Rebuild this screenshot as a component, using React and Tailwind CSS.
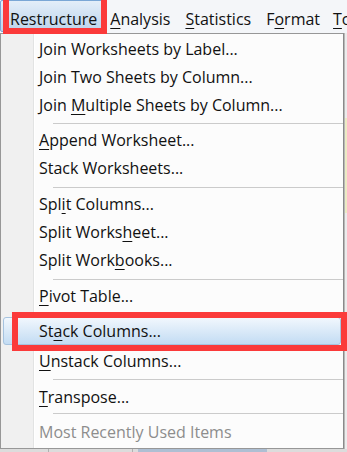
import React from 'react';

const Mn = ({ pre = '', u = '', post = '' }) => (
  <span className="whitespace-pre">
    {pre}
    {u && <span className="underline underline-offset-[3px] decoration-[1px]">{u}</span>}
    {post}
  </span>
);

const Row = ({ children, className = '' }) => (
  <div className={`flex h-[28px] items-center pl-[38px] whitespace-nowrap ${className}`}>
    <span>{children}</span>
  </div>
);

const Sep = ({ className }) => (
  <div className={className}>
    <div className="ml-[52px] h-px bg-[#cbcbcb]" />
  </div>
);

const MenuBar = () => (
  <div className="flex h-[33px] items-start bg-[#f4f6f9] text-[16px] text-[#111]">
    <div className="flex h-[32px] items-center rounded-[2px] border border-[#7aa7d6] bg-gradient-to-b from-[#e3eef9] to-[#bcd4ec] pl-[9px] pr-[5px] pt-[6px]">
      <Mn pre="Restr" u="u" post="cture" />
    </div>
    <div className="flex h-[32px] items-center pl-[7px] pr-[7px] pt-[6px]">
      <Mn u="A" post="nalysis" />
    </div>
    <div className="flex h-[32px] items-center px-[8px] pt-[6px]">
      <Mn u="S" post="tatistics" />
    </div>
    <div className="flex h-[32px] items-center px-[7px] pt-[6px]">
      <Mn pre="F" u="o" post="rmat" />
    </div>
    <div className="flex h-[32px] items-center pl-[6px] pt-[6px]">
      <Mn u="T" post="o" />
    </div>
  </div>
);

const Menu = () => (
  <div className="w-[344px] border border-[#979797] border-r-[#8a8a8a] bg-[linear-gradient(to_right,#f0f0f0_0_32px,#e2e3e3_32px_33px,#ffffff_33px_34px,#fcfcfc_34px)] pt-[1px] pb-[2px] text-[16px] text-[#111]">
    <Row>Join Worksheets by Label...</Row>
    <Row>Join Two Sheets by Column...</Row>
    <Row>
      <Mn pre="Join " u="M" post="ultiple Sheets by Column..." />
    </Row>
    <Sep className="pt-[4px] pb-[2px]" />
    <Row>
      <Mn u="A" post="ppend Worksheet..." />
    </Row>
    <Row>Stack Worksheets...</Row>
    <Sep className="pt-[5px] pb-[2px]" />
    <Row>
      <Mn pre="Spl" u="i" post="t Columns..." />
    </Row>
    <Row>
      <Mn pre="Split Works" u="h" post="eet..." />
    </Row>
    <Row>
      <Mn pre="Split Work" u="b" post="ooks..." />
    </Row>
    <Sep className="pt-[5px] pb-[2px]" />
    <Row>
      <Mn u="P" post="ivot Table..." />
    </Row>
    <div className="mt-[7px] mx-[2px] flex h-[28px] items-center rounded-[3px] border border-[#a6c3df] bg-gradient-to-b from-[#f1f7fd] to-[#c3dcf3] pl-[35px] whitespace-nowrap">
      <Mn pre="St" u="a" post="ck Columns..." />
    </div>
    <Row className="mt-[2px]">
      <Mn u="U" post="nstack Columns..." />
    </Row>
    <Sep className="pt-[4px] pb-[3px]" />
    <Row>
      <Mn u="T" post="ranspose..." />
    </Row>
    <Sep className="pt-[2px] pb-[4px]" />
    <Row className="text-[#8d8d8d]">Most Recently Used Items</Row>
  </div>
);

const RightStrip = () => (
  <div className="flex flex-1 flex-col border-l border-[#b8b8b8]">
    <div className="h-[85px] bg-[#ececec]" />
    <div className="h-[95px] bg-[#ecebc4]" />
    <div className="flex-1 bg-[#ececec]" />
  </div>
);

const BottomStrip = () => (
  <div className="flex h-[3px] bg-[#dcdcdc]">
    <div className="w-[49px] border-r border-[#b0b0b0]" />
    <div className="w-[84px] border-r border-[#b0b0b0]" />
    <div className="ml-[5px] w-[129px] bg-[#aebfd3]" />
  </div>
);

export default function App() {
  return (
    <div className="relative w-[347px] h-[452px] overflow-hidden bg-[#e6e6e6] font-['Open_Sans',sans-serif]">
      <MenuBar />
      <div className="flex">
        <Menu />
        <RightStrip />
      </div>
      <BottomStrip />

      {/* red callouts */}
      <div className="absolute left-[3px] top-[-6px] h-[40px] w-[104px] border-[6px] border-[#fb3a3a]" />
      <div className="absolute left-[12px] top-[312px] h-[39px] w-[335px] border-[6px] border-[#fb3a3a]" />
    </div>
  );
}
